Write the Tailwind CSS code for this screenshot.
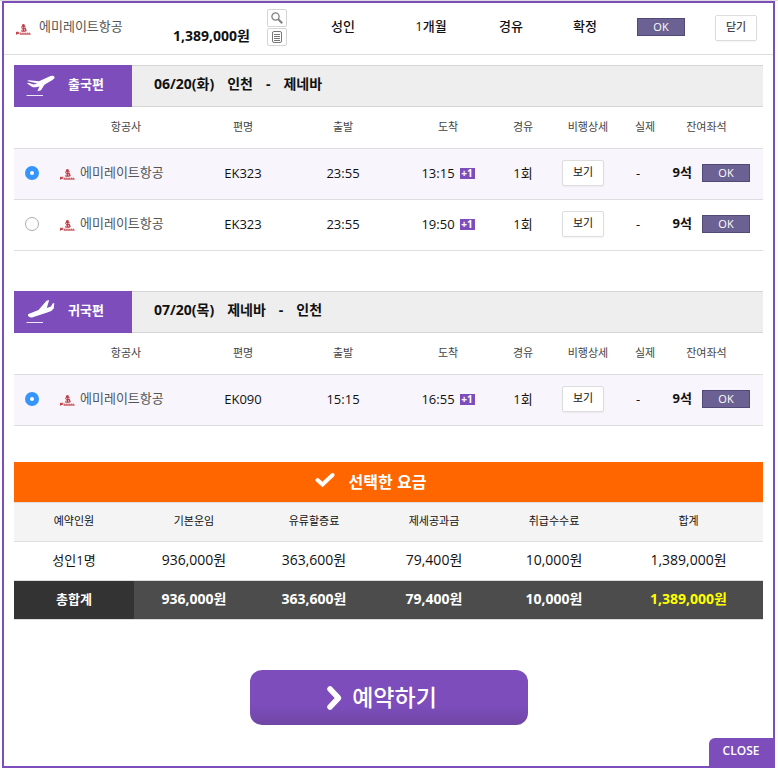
<!DOCTYPE html>
<html lang="ko">
<head>
<meta charset="utf-8">
<meta name="viewport" content="width=device-width, initial-scale=1">
<title>항공 예약</title>
<script src="https://cdn.jsdelivr.net/npm/@tailwindcss/browser@4"></script>
</head>
<body class="bg-white font-['Open_Sans','Noto_Sans_CJK_KR',sans-serif] text-[13px] leading-5 text-[#111]">
<svg class="hidden" aria-hidden="true">
  <symbol id="logo" viewBox="0 0 15 11">
    <g fill="none" stroke="#c23a42">
      <path d="M6 1.4 7.6.7 8.8 1.6M5.2 3.4 6.6 2.6 9.6 2.8M5.8 4.8 9.8 4.5M7.6 1.2V7M5.2 6.6Q7.5 7.8 10 6.6L9.4 4.8" stroke-width="1.2"/>
      <path d="M.3 8.3H3.4M.3 9.5H2.8M.6 8V10.6M3.6 10.1H14.7" stroke-width="1"/>
      <path d="M3.8 9.2H14.5" stroke-dasharray="1.2 .6" stroke-width="1"/>
    </g>
  </symbol>
</svg>
<div class="h-px bg-[#ddd]"></div>
<main class="relative ml-[2px] mr-[3px] border-2 border-[#7c4dbb] pb-[41px]">
  <header class="flex h-[52px] items-center border-b border-[#ddd] pl-3 pr-4 text-[13px] font-medium">
    <div class="flex w-[135px] shrink-0 items-center gap-2 pb-[6px] font-normal text-[#555]"><svg class="mt-2 h-[11px] w-[15px]"><use href="#logo"/></svg>에미레이트항공</div>
    <strong class="mt-[14px] w-[99px] shrink-0 text-right text-[14px]">1,389,000원</strong>
    <div class="mb-[2px] ml-[17px] flex shrink-0 flex-col gap-px">
      <button aria-label="검색" class="flex h-[18px] w-5 items-center justify-center rounded-xs border border-[#d5d5d5]"><svg class="size-3" viewBox="0 0 12 12" fill="none" stroke="#808080"><circle cx="4.5" cy="4.5" r="3.6" stroke-width="1.3"/><path d="M7.2 7.2 11.2 11.2" stroke-width="2"/></svg></button>
      <button aria-label="상세 내역" class="flex h-[18px] w-5 items-center justify-center rounded-xs border border-[#d5d5d5]"><svg class="size-3" viewBox="0 0 12 12" fill="none" stroke="#777"><rect x="1.5" y=".5" width="9" height="11" rx="1.5"/><path d="M3 3.5H9M3 5.5H9M3 7.5H9M3 9.5H9"/></svg></button>
    </div>
    <div class="grid grow grid-cols-[112fr_64fr_96fr_52fr_26fr] pb-[6px] text-center *:whitespace-nowrap">
      <span>성인</span><span>1개월</span><span>경유</span><span>확정</span><span></span>
    </div>
    <span class="mb-[3px] mr-[30px] h-[18px] w-12 shrink-0 border border-[#524a76] bg-[#6b6192] text-center text-[11px] leading-4 text-white">OK</span>
    <button class="mb-[2px] h-[26px] w-[42px] shrink-0 rounded-xs border border-[#ddd] pb-[2px] text-[11px] leading-5 text-[#444] shadow-xs">닫기</button>
  </header>

  <div class="px-[10px] pt-[10px]">
    <section class="mb-10">
      <h2 class="flex h-[42px] font-bold">
        <span class="flex w-[118px] shrink-0 items-center gap-3 bg-[#7c4dbb] pb-1 pl-3 text-white"><svg class="mt-1 h-6 w-[30px]" viewBox="0 0 30 24"><path fill="#fff" d="M1 7 3 6.2 13 7.2 24.5 2Q27.6 1 28.4 2.7T26 6.2L18.4 10.8 15 16.2 11.4 17.3 13.4 12.4 9.8 13.3Q7 13.6 5.5 12.4L.8 9.2 3.2 8.9 7.6 10.4 11.5 9.6Z"/><path d="M.5 21.5H17" stroke="#efe6f8"/></svg>출국편</span>
        <span class="flex grow items-center gap-[13px] border-y border-[#d5d5d5] bg-[#eee] pb-1 pl-[22px] text-[14px]"><span>06/20(화)</span><span>인천</span><span>-</span><span>제네바</span></span>
      </h2>
      <table class="w-full table-fixed border-separate border-spacing-0 text-center">
        <colgroup><col class="w-[36px]"><col class="w-[152px]"><col class="w-[82px]"><col class="w-[118px]"><col class="w-[92px]"><col class="w-[58px]"><col class="w-[72px]"><col class="w-[42px]"><col class="w-[97px]"></colgroup>
        <thead><tr class="h-[42px] text-[11px] text-[#444] *:border-b *:border-[#ddd] *:pb-[2px] *:font-normal"><td></td><th>항공사</th><th>편명</th><th>출발</th><th>도착</th><th>경유</th><th>비행상세</th><th>실제</th><th class="pr-4">잔여좌석</th></tr></thead>
        <tbody>
          <tr class="h-[51px] bg-[#f8f5fc] *:border-b *:border-[#ddd] *:pb-[2px]">
            <td><input type="radio" name="out" id="out1" checked class="mx-auto block size-[14px] appearance-none rounded-full border border-[#aaa] bg-white checked:border-5 checked:border-[#3595fb]"></td>
            <td><label for="out1" class="flex items-center gap-[5px] pb-[2px] pl-[10px] text-[#555]"><svg class="mt-1 h-[11px] w-[15px]"><use href="#logo"/></svg>에미레이트항공</label></td>
            <td>EK323</td><td>23:55</td>
            <td><span class="flex items-center justify-center gap-[5px]">13:15<b class="h-[11px] w-[15px] bg-[#7c4dbb] text-[10px] leading-[11px] text-white">+1</b></span></td>
            <td>1회</td>
            <td class="pr-[10px]"><button class="h-[26px] w-[42px] rounded-xs border border-[#ddd] bg-white pb-[2px] text-[11px] shadow-xs">보기</button></td>
            <td class="pr-[14px]">-</td>
            <td><span class="flex items-center justify-end gap-[10px] pr-[13px]"><b class="pb-[2px]">9석</b><span class="h-[18px] w-12 border border-[#524a76] bg-[#6b6192] text-[11px] leading-4 text-white">OK</span></span></td>
          </tr>
          <tr class="h-[51px] *:border-b *:border-[#ddd] *:pb-[2px]">
            <td><input type="radio" name="out" id="out2" class="mx-auto block size-[14px] appearance-none rounded-full border border-[#aaa] bg-white checked:border-5 checked:border-[#3595fb]"></td>
            <td><label for="out2" class="flex items-center gap-[5px] pb-[2px] pl-[10px] text-[#555]"><svg class="mt-1 h-[11px] w-[15px]"><use href="#logo"/></svg>에미레이트항공</label></td>
            <td>EK323</td><td>23:55</td>
            <td><span class="flex items-center justify-center gap-[5px]">19:50<b class="h-[11px] w-[15px] bg-[#7c4dbb] text-[10px] leading-[11px] text-white">+1</b></span></td>
            <td>1회</td>
            <td class="pr-[10px]"><button class="h-[26px] w-[42px] rounded-xs border border-[#ddd] bg-white pb-[2px] text-[11px] shadow-xs">보기</button></td>
            <td class="pr-[14px]">-</td>
            <td><span class="flex items-center justify-end gap-[10px] pr-[13px]"><b class="pb-[2px]">9석</b><span class="h-[18px] w-12 border border-[#524a76] bg-[#6b6192] text-[11px] leading-4 text-white">OK</span></span></td>
          </tr>
        </tbody>
      </table>
    </section>

    <section class="mb-9">
      <h2 class="flex h-[42px] font-bold">
        <span class="flex w-[118px] shrink-0 items-center gap-3 bg-[#7c4dbb] pb-1 pl-3 text-white"><svg class="mt-1 h-6 w-[30px]" viewBox="0 0 30 24"><path fill="#fff" d="M2.5 14 12.5 10 20.5 .8 23.2 0 20.8 8 25 6.4 26.6 3.4 28.3 3 27.8 8.4Q26 11 22 12.3L6 17.4Q2.8 17.8 2.2 16T2.5 14Z"/><path d="M.5 22.5H17" stroke="#efe6f8"/></svg>귀국편</span>
        <span class="flex grow items-center gap-[13px] border-y border-[#d5d5d5] bg-[#eee] pb-1 pl-[22px] text-[14px]"><span>07/20(목)</span><span>제네바</span><span>-</span><span>인천</span></span>
      </h2>
      <table class="w-full table-fixed border-separate border-spacing-0 text-center">
        <colgroup><col class="w-[36px]"><col class="w-[152px]"><col class="w-[82px]"><col class="w-[118px]"><col class="w-[92px]"><col class="w-[58px]"><col class="w-[72px]"><col class="w-[42px]"><col class="w-[97px]"></colgroup>
        <thead><tr class="h-[42px] text-[11px] text-[#444] *:border-b *:border-[#ddd] *:pb-[2px] *:font-normal"><td></td><th>항공사</th><th>편명</th><th>출발</th><th>도착</th><th>경유</th><th>비행상세</th><th>실제</th><th class="pr-4">잔여좌석</th></tr></thead>
        <tbody>
          <tr class="h-[51px] bg-[#f8f5fc] *:border-b *:border-[#ddd] *:pb-[2px]">
            <td><input type="radio" name="in" id="in1" checked class="mx-auto block size-[14px] appearance-none rounded-full border border-[#aaa] bg-white checked:border-5 checked:border-[#3595fb]"></td>
            <td><label for="in1" class="flex items-center gap-[5px] pb-[2px] pl-[10px] text-[#555]"><svg class="mt-1 h-[11px] w-[15px]"><use href="#logo"/></svg>에미레이트항공</label></td>
            <td>EK090</td><td>15:15</td>
            <td><span class="flex items-center justify-center gap-[5px]">16:55<b class="h-[11px] w-[15px] bg-[#7c4dbb] text-[10px] leading-[11px] text-white">+1</b></span></td>
            <td>1회</td>
            <td class="pr-[10px]"><button class="h-[26px] w-[42px] rounded-xs border border-[#ddd] bg-white pb-[2px] text-[11px] shadow-xs">보기</button></td>
            <td class="pr-[14px]">-</td>
            <td><span class="flex items-center justify-end gap-[10px] pr-[13px]"><b class="pb-[2px]">9석</b><span class="h-[18px] w-12 border border-[#524a76] bg-[#6b6192] text-[11px] leading-4 text-white">OK</span></span></td>
          </tr>
        </tbody>
      </table>
    </section>

    <section>
      <h2 class="flex h-10 items-center justify-center gap-[14px] bg-[#ff6600] pr-9 text-[16px] font-bold text-white"><svg class="mb-1 h-4 w-5" viewBox="0 0 20 16"><path d="M2.5 8 7.5 12.5 17.5 3" fill="none" stroke="#fff" stroke-width="4" stroke-linecap="round"/></svg>선택한 요금</h2>
      <table class="w-full table-fixed border-separate border-spacing-0 text-center text-[14px]">
        <colgroup><col class="w-[120px]"><col class="w-[120px]"><col class="w-[120px]"><col class="w-[120px]"><col class="w-[120px]"><col class="w-[149px]"></colgroup>
        <thead><tr class="h-10 bg-[#f4f4f4] text-[11px] *:border-y *:border-[#ddd] *:pb-[3px] *:font-normal"><th>예약인원</th><th>기본운임</th><th>유류할증료</th><th>제세공과금</th><th>취급수수료</th><th>합계</th></tr></thead>
        <tbody>
          <tr class="h-[39px] *:border-b *:border-[#ddd] *:pb-[3px]"><th class="text-[13px] font-normal">성인1명</th><td>936,000원</td><td>363,600원</td><td>79,400원</td><td>10,000원</td><td>1,389,000원</td></tr>
          <tr class="h-[39px] bg-[#4c4c4c] font-bold text-white *:border-b *:border-[#ddd] *:pb-[3px]"><th class="bg-[#333] text-[13px]">총합계</th><td>936,000원</td><td>363,600원</td><td>79,400원</td><td>10,000원</td><td class="text-[#ffff00]">1,389,000원</td></tr>
        </tbody>
      </table>
    </section>

    <button class="mx-auto mt-[50px] flex h-[55px] w-[278px] items-center justify-center gap-2 rounded-xl bg-linear-to-b from-[#7c4dbb] from-65% to-[#7046a5] pr-[14px] text-[23px] font-medium text-white"><svg class="h-[26px] w-[18px]" viewBox="0 0 18 26"><path d="M4 4 12.5 13 4 22" fill="none" stroke="#fff" stroke-width="5.5" stroke-linecap="round" stroke-linejoin="round"/></svg><span class="pb-[2px]">예약하기</span></button>
  </div>
  <button class="absolute bottom-0 right-0 h-7 w-16 rounded-tl-md bg-[#7c4dbb] pb-[2px] text-[12px] font-semibold text-white">CLOSE</button>
</main>
</body>
</html>
